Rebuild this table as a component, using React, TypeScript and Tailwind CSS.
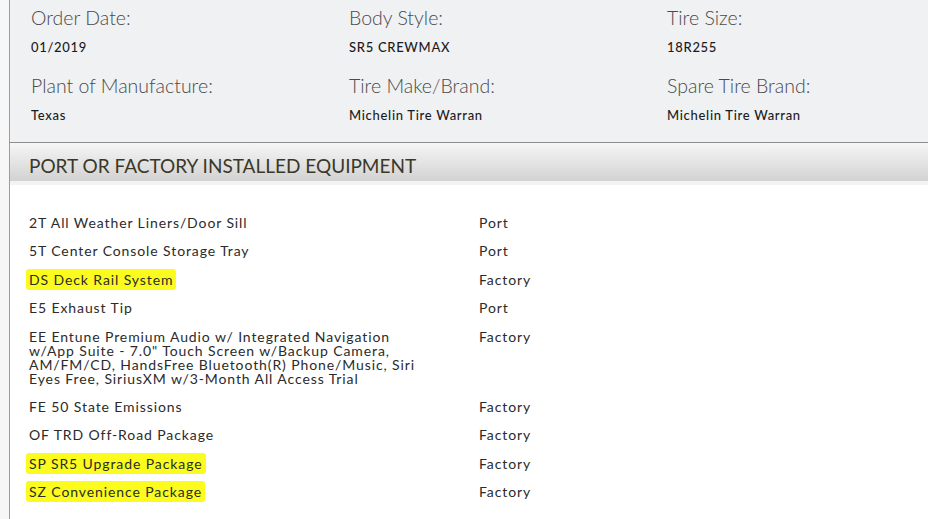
const specs = [
  { label: "Order Date:", value: "01/2019" },
  { label: "Body Style:", value: "SR5 CREWMAX" },
  { label: "Tire Size:", value: "18R255" },
  { label: "Plant of Manufacture:", value: "Texas" },
  { label: "Tire Make/Brand:", value: "Michelin Tire Warran" },
  { label: "Spare Tire Brand:", value: "Michelin Tire Warran" },
];

const equipment: { name: string[]; kind: string; mark?: boolean }[] = [
  { name: ["2T All Weather Liners/Door Sill"], kind: "Port" },
  { name: ["5T Center Console Storage Tray"], kind: "Port" },
  { name: ["DS Deck Rail System"], kind: "Factory", mark: true },
  { name: ["E5 Exhaust Tip"], kind: "Port" },
  {
    name: [
      "EE Entune Premium Audio w/ Integrated Navigation",
      'w/App Suite - 7.0" Touch Screen w/Backup Camera,',
      "AM/FM/CD, HandsFree Bluetooth(R) Phone/Music, Siri",
      "Eyes Free, SiriusXM w/3-Month All Access Trial",
    ],
    kind: "Factory",
  },
  { name: ["FE 50 State Emissions"], kind: "Factory" },
  { name: ["OF TRD Off-Road Package"], kind: "Factory" },
  { name: ["SP SR5 Upgrade Package"], kind: "Factory", mark: true },
  { name: ["SZ Convenience Package"], kind: "Factory", mark: true },
];

export default function App() {
  return (
    <div className="h-[519px] w-[928px] overflow-hidden bg-[#f7f7f7] pl-[9px] font-['Lato',sans-serif]">
      <div className="h-full border-l border-[#9c9c9c] bg-white">
        {/* vehicle specs */}
        <section className="grid h-[142px] grid-cols-[318px_318px_1fr] content-start bg-[#f0f1f3] pl-[21px] pt-[5px]">
          {specs.map((s) => (
            <div key={s.label} className="h-[68px]">
              <div className="text-[19.5px] font-light leading-[26px] text-[#4a4a4a]">{s.label}</div>
              <div className="mt-[8px] text-[13px] font-medium leading-[16px] tracking-[0.7px] text-[#1c1c1c]">
                {s.value}
              </div>
            </div>
          ))}
        </section>

        <div className="border-t border-[#8e8e8e]">
          <h2 className="h-[38px] bg-gradient-to-b from-[#f6f6f6] to-[#d2d2d2] pl-[19px] pt-[3px] text-[19px] leading-[40px] text-[#3b3828]">
            PORT OR FACTORY INSTALLED EQUIPMENT
          </h2>
          <div className="h-[4px] bg-[#f3f3f3]" />
        </div>

        {/* equipment list */}
        <ul className="flex flex-col gap-[14.4px] pl-[19px] pt-[31px]">
          {equipment.map((e) => (
            <li key={e.name[0]} className="flex text-[14px] leading-[14px] tracking-[0.9px] text-[#2b2b2b]">
              <div className="w-[450px]">
                {e.name.map((line) => (
                  <div key={line}>
                    <span
                      className={
                        e.mark
                          ? "-ml-[3px] rounded-[3px] bg-[#fbfb1e] px-[3px] py-[2px]"
                          : ""
                      }
                    >
                      {line}
                    </span>
                  </div>
                ))}
              </div>
              <div>{e.kind}</div>
            </li>
          ))}
        </ul>
      </div>
    </div>
  );
}
